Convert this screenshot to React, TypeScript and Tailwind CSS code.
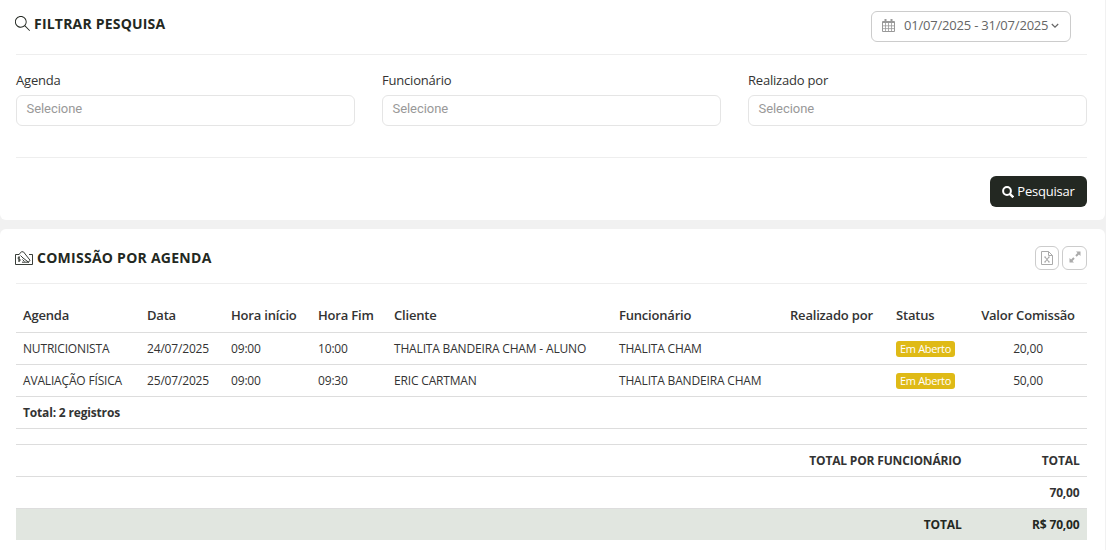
import type { ReactNode } from "react";
import clsx from "clsx";
import { SlMagnifier } from "react-icons/sl";

const filters = ["Agenda", "Funcionário", "Realizado por"];

const columns = [
  { label: "Agenda", width: "w-[124px]" },
  { label: "Data", width: "w-[84px]" },
  { label: "Hora início", width: "w-[87px]" },
  { label: "Hora Fim", width: "w-[76px]" },
  { label: "Cliente", width: "w-[225px]" },
  { label: "Funcionário", width: "w-[171px]" },
  { label: "Realizado por", width: "w-[106px]" },
  { label: "Status", width: "w-[80px]" },
  { label: "Valor Comissão", width: "w-[118px]" },
];

const rows = [
  {
    agenda: "NUTRICIONISTA",
    data: "24/07/2025",
    inicio: "09:00",
    fim: "10:00",
    cliente: "THALITA BANDEIRA CHAM - ALUNO",
    funcionario: "THALITA CHAM",
    valor: "20,00",
  },
  {
    agenda: "AVALIAÇÃO FÍSICA",
    data: "25/07/2025",
    inicio: "09:00",
    fim: "09:30",
    cliente: "ERIC CARTMAN",
    funcionario: "THALITA BANDEIRA CHAM",
    valor: "50,00",
  },
];

export default function App() {
  return (
    <div className="h-[550px] w-[1106px] overflow-hidden bg-[#f1f1f1] pr-px font-['Open_Sans',sans-serif] text-[13px] tracking-[-0.2px] text-[#333]">
      <section className="h-[220px] rounded-b-md bg-white pr-[18px] pl-4">
        <div className="flex h-[55px] items-start justify-between border-b border-[#eee]">
          <Title icon={<SlMagnifier size={15} className="mb-0.5" />} className="mt-[13px] tracking-[0.2px]">
            FILTRAR PESQUISA
          </Title>
          <button className="mt-[11px] mr-4 flex h-[31px] w-[200px] items-center rounded-md border border-[#ccc] pb-0.5 pl-2.5 whitespace-nowrap text-[#666]">
            <CalendarIcon />
            <span className="ml-[9px]">01/07/2025 - 31/07/2025</span>
            <svg viewBox="0 0 8 6" className="ml-[3px] h-1.5 w-2" fill="none" stroke="currentColor" strokeWidth="1.2">
              <path d="M.8 1L4 4.200 7.200 1" />
            </svg>
          </button>
        </div>

        <div className="grid h-[103px] grid-cols-3 gap-[27px] border-b border-[#eee] pt-4">
          {filters.map((label) => (
            <label key={label} className="block leading-[18px]">
              {label}
              <span className="mt-1.5 block h-[31px] rounded-md border border-[#e5e5e5] pt-1 pl-[9.5px] font-[Roboto,sans-serif] tracking-[-0.05px] text-[#999]">
                Selecione
              </span>
            </label>
          ))}
        </div>

        <div className="flex justify-end pt-[18px]">
          <button className="flex h-[31px] w-[97px] items-center justify-center gap-[3px] rounded-md bg-[#232822] text-white">
            <svg viewBox="0 0 12 12" className="size-3" fill="none" stroke="currentColor" strokeWidth="2">
              <circle cx="5" cy="5" r="3.9" />
              <path d="M7.8 7.8l3.5 3.5" strokeWidth="2.4" />
            </svg>
            Pesquisar
          </button>
        </div>
      </section>

      <section className="mt-[9px] h-[321px] rounded-t-md bg-white pr-[18px] pl-4">
        <div className="flex h-[55px] items-start justify-between border-b border-[#eee]">
          <Title icon={<CommissionIcon />} className="mt-[18px] tracking-[0.26px]">
            COMISSÃO POR AGENDA
          </Title>
          <div className="mt-[17px] flex gap-[3px] text-[#aaa]">
            <button className="grid h-6 w-6 place-items-center rounded-md border border-[#ccc]">
              <ExcelIcon />
            </button>
            <button className="grid h-6 w-[25px] place-items-center rounded-md border border-[#ccc]">
              <ExpandIcon />
            </button>
          </div>
        </div>

        <table className="mt-[15px] w-[1071px] table-fixed border-separate border-spacing-0 text-[12px] tracking-[-0.17px] whitespace-nowrap">
          <thead>
            <tr className="h-[34px] text-[13px] tracking-[-0.2px] *:border-b *:border-[#ddd]">
              {columns.map(({ label, width }) => (
                <th
                  key={label}
                  className={clsx("px-[7px] text-left font-semibold last:text-center", width)}
                >
                  {label}
                </th>
              ))}
            </tr>
          </thead>
          <tbody>
            {rows.map((row) => (
              <tr key={row.agenda} className="h-8 *:border-b *:border-[#ddd] *:px-[7px]">
                <td>{row.agenda}</td>
                <td>{row.data}</td>
                <td>{row.inicio}</td>
                <td>{row.fim}</td>
                <td>{row.cliente}</td>
                <td>{row.funcionario}</td>
                <td />
                <td className="pt-px">
                  <span className="flex h-4 w-[59px] items-center justify-center rounded-[3px] bg-[#dfba16] pt-px text-[11px] tracking-[-0.35px] text-white">
                    Em Aberto
                  </span>
                </td>
                <td className="text-center">{row.valor}</td>
              </tr>
            ))}
            <tr className="h-8 font-bold">
              <td colSpan={9} className="border-b border-[#ddd] px-[7px]">
                Total: 2 registros
              </td>
            </tr>
          </tbody>
        </table>

        <div className="mt-[15px] border-t border-[#ddd] text-[12px] font-bold">
          <TotalRow label="TOTAL POR FUNCIONÁRIO" value="TOTAL" />
          <TotalRow label="" value="70,00" />
          <TotalRow label="TOTAL" value="R$ 70,00" highlighted />
        </div>
      </section>
    </div>
  );
}

type TitleProps = {
  icon: ReactNode;
  className: string;
  children: ReactNode;
};

function Title({ icon, className, children }: TitleProps) {
  return (
    <h2
      className={clsx(
        "-ml-px flex items-center gap-[4px] text-[14px] leading-[22px] font-bold text-[#232822]",
        className,
      )}
    >
      {icon}
      {children}
    </h2>
  );
}

type TotalRowProps = {
  label: string;
  value: string;
  highlighted?: boolean;
};

function TotalRow({ label, value, highlighted }: TotalRowProps) {
  return (
    <div
      className={clsx(
        "flex items-center text-right tracking-[-0.17px]",
        highlighted ? "h-[31px] bg-[#e1e6e0] text-[#232822]" : "h-8 border-b border-[#ddd]",
      )}
    >
      <span className="flex-1 pr-[7.5px]">{label}</span>
      <span className="w-[118px] pr-[7.5px]">{value}</span>
    </div>
  );
}

function CalendarIcon() {
  return (
    <svg viewBox="0 0 13 13" className="h-[13px] w-[13px] text-[#999]" fill="none" stroke="currentColor">
      <path d="M.5 2.5h12v10H.5z" />
      <path d="M1 3h11" strokeWidth="2" />
      <path d="M3.5 0v3M9.5 0v3" strokeWidth="2" />
      <path d="M3.5 4v8M6.5 4v8M9.5 4v8M1 6.8h11M1 9.6h11" strokeWidth=".8" />
    </svg>
  );
}

function CommissionIcon() {
  return (
    <svg viewBox="0 0 18 14" className="h-3.5 w-[18px]" fill="none" stroke="currentColor" strokeWidth=".9">
      <path d="M4 3.5H.5v10h17v-10H14" />
      <path d="M3.5 4L6.500.7l2 .2 6.500 8.300-1.500 2L8 7 5.500 4.500" />
      <path d="M7 11.200h7M7.500 8.500l2 2" />
      <path d="M5 6.200H3.200v1.900H5V10H3M4.100 5.400v5.400" strokeWidth=".8" />
    </svg>
  );
}

function ExcelIcon() {
  return (
    <svg viewBox="0 0 12 14" className="h-3.5 w-3" fill="none" stroke="currentColor">
      <path d="M.5.5h7l4 4v9H.5zM7.5.5v4h4" />
      <path d="M4 6l4 5M8 6l-4 5" strokeWidth="1.2" />
      <path d="M3 6h2M7 6h2M3 11h2M7 11h2" strokeWidth=".8" />
    </svg>
  );
}

function ExpandIcon() {
  return (
    <svg viewBox="0 0 12 12" className="mb-0.5 size-3" fill="currentColor">
      <path d="M7 .5h4.500v4.500L9.900 3.500 7.700 5.700 6.300 4.300l2.200-2.200z" />
      <path d="M5 11.500H.5V7l1.600 1.500 2.200-2.200 1.400 1.400-2.200 2.200z" />
    </svg>
  );
}
